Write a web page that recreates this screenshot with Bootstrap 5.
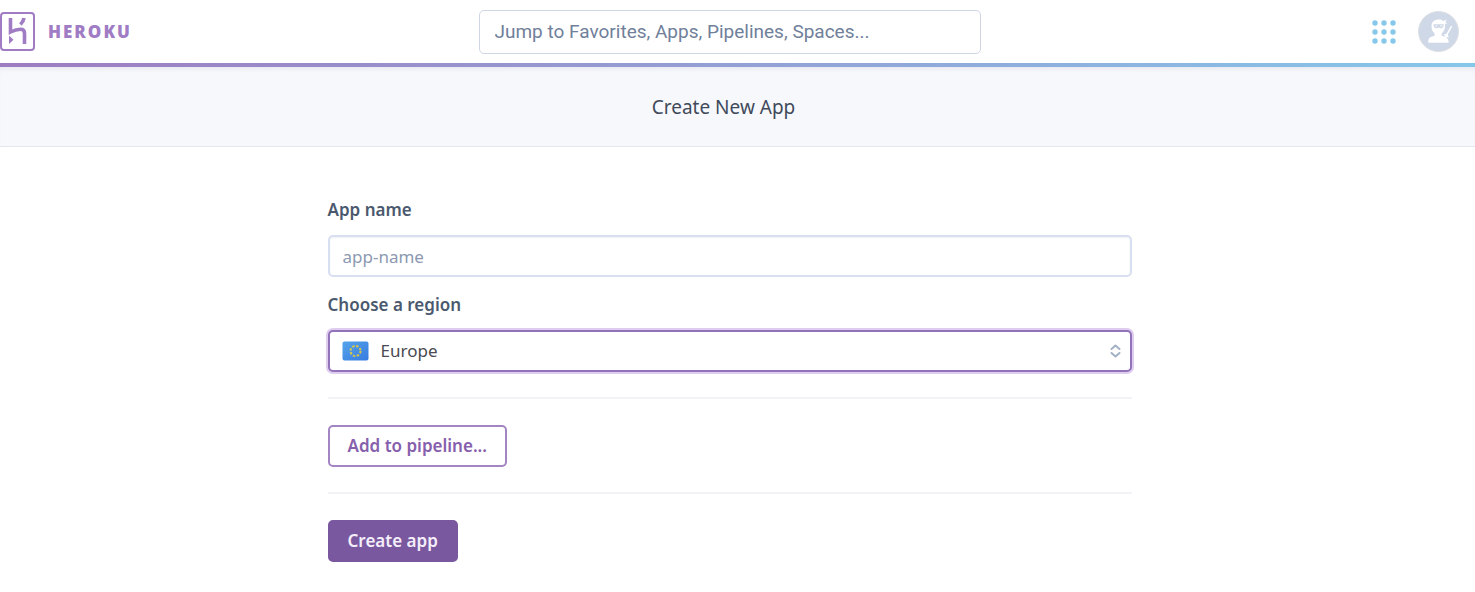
<!DOCTYPE html>
<html lang="en">
<head>
<meta charset="utf-8">
<meta name="viewport" content="width=device-width, initial-scale=1">
<title>Create New App | Heroku</title>
<link href="https://cdn.jsdelivr.net/npm/bootstrap@5.3.0/dist/css/bootstrap.min.css" rel="stylesheet">
<style>
  body { font-family: "Noto Sans", "Open Sans", sans-serif; font-size: 17px; line-height: 24px; color: #3f4e63; }
  .topbar { height: 63px; padding-right: 16px; display: grid; grid-template-columns: 1fr minmax(0, 502px) 1fr; column-gap: 16px; }
  .brand-link { color: #a07cc4; gap: 13px; }
  .brand-word { font-family: "Open Sans", sans-serif; font-size: 17px; font-weight: 800; letter-spacing: 2px; }
  .rainbow { height: 4px; background: linear-gradient(90deg, #9e7cc1, #8fabdc 65%, #86c7e9); }
  .jump { height: 44px; padding: 0 15px; font-family: Roboto, sans-serif; font-size: 19px; border: 1px solid #cfd7e6; border-radius: 5px; }
  .jump::placeholder { color: #70809a; }
  .tools { gap: 22px; }
  .titlebar { height: 80px; background: #f7f8fc; border-bottom: 1px solid #e3e8f0; box-shadow: inset 0 5px 5px -3px #e6e8f0; padding-right: 28px; }
  .titlebar h1 { font-size: 19px; line-height: 24px; color: #3f4a5a; font-weight: 400; }
  main { padding-right: 16px; }
  .app-form { max-width: 804px; padding-top: 51px; }
  .form-label { line-height: 24px; font-weight: 600; font-size: 17px; color: #4b596e; margin-bottom: 13px; }
  .field { height: 42px; font-size: 17px; padding: 0 13px; border: 2px solid #d8dff0; border-radius: 5px; box-shadow: inset 0 1px 2px #eef0f6; }
  .field::placeholder { color: #8c99b0; }
  .region { border-color: #9272b8; color: #4a4a50; padding: 0 32px 0 51px; background-image: none; box-shadow: 0 0 0 2px #dfcdf0; }
  .region:focus { border-color: #79589f; box-shadow: 0 0 0 3px #dfcdf0; }
  .flag { left: 14px; top: 11px; }
  .chevrons { right: 11px; top: 14px; }
  .divider { border: 0; border-top: 2px solid #f2f3f7; opacity: 1; margin: 25px 0 26px; }
  .action { height: 42px; padding: 0 18px; font-size: 17px; line-height: 24px; font-weight: 600; border: 2px solid #79589f; border-radius: 5px; }
  .action-outline { color: #8660ac; border-color: #a285c2; background: #fff; }
  .action-solid { color: #f4eefa; background: #79589f; }
  .action-outline:hover { color: #fff; background: #8660ac; }
  .action-solid:hover { color: #fff; background: #694b8d; }
</style>
</head>
<body>
<header>
  <div class="topbar align-items-center">
    <a class="brand-link d-inline-flex align-items-center text-decoration-none" href="#">
      <svg width="35" height="40" viewBox="0 0 35 40" fill="none" aria-hidden="true">
        <rect x="1" y="1" width="33" height="37" rx="3" stroke="currentColor" stroke-width="2"/>
        <path d="M10.500 6v14c4-2 7-2.800 10-2.800 3 0 4 1.500 4 4V32M24 6c-.4 2.500-1.600 4.500-3.600 6.500" stroke="currentColor" stroke-width="3.600"/>
        <path d="M9 23.500l4.500 4.200L9 32z" fill="currentColor"/>
      </svg>
      <span class="brand-word">HEROKU</span>
    </a>
    <input class="form-control jump" type="search" aria-label="Jump to" placeholder="Jump to Favorites, Apps, Pipelines, Spaces...">
    <div class="tools d-flex align-items-center justify-content-end">
      <button class="btn p-0 border-0 d-flex" type="button" aria-label="Applications">
        <svg width="25" height="24" viewBox="0 0 25 24" fill="#85c8ea">
          <circle cx="4" cy="3" r="2.700"/><circle cx="13" cy="3" r="2.700"/><circle cx="22" cy="3" r="2.700"/>
          <circle cx="4" cy="12" r="2.700"/><circle cx="13" cy="12" r="2.700"/><circle cx="22" cy="12" r="2.700"/>
          <circle cx="4" cy="21" r="2.700"/><circle cx="13" cy="21" r="2.700"/><circle cx="22" cy="21" r="2.700"/>
        </svg>
      </button>
      <button class="btn p-0 border-0 d-flex" type="button" aria-label="Account">
        <svg width="41" height="41" viewBox="0 0 41 41">
          <circle cx="20.500" cy="20.500" r="20" fill="#cfd8e7" stroke="#dedfe4"/>
          <path d="M13.500 15c0-4 3-6.500 7-6.500 2 0 3.500.5 4.700 1.400l3.500-1.400-1.200 2.200 1.700 2.300-2.200-.6c.4 4.500-.8 8-3.400 10v2.200l3 1.200 2.100-3.300 1.500 1-1.700 3.500c1.700 1 2.200 2.500 2.200 4.700H10.300c0-4 .9-5.200 3.300-6l3-1v-2.300c-2.200-1.700-3.100-4.100-3.100-7.400z" fill="#fff"/>
          <path d="M27.500 24.500l5.500-9.800 1.300.8-5.500 9.800zM26.500 22.800l4.300 2.500-.7 1.200-4.300-2.500z" fill="#fff"/>
          <path d="M15.500 13.300h10.300c0 2.500-1.100 3.900-3 3.900-1 0-1.600-.4-2.100-1-.5.600-1.200 1-2.100 1-1.900 0-3.100-1.400-3.100-3.900z" fill="#cfd8e7"/>
          <path d="M17.300 15h2M22.300 15h2" stroke="#fff"/>
        </svg>
      </button>
    </div>
  </div>
  <div class="rainbow"></div>
</header>
<div class="titlebar d-flex align-items-center justify-content-center">
  <h1 class="m-0">Create New App</h1>
</div>
<main>
  <form class="app-form mx-auto">
    <div class="mb-3">
      <label class="form-label d-block" for="app-name">App name</label>
      <input class="form-control field" id="app-name" type="text" placeholder="app-name">
    </div>
    <div>
      <label class="form-label d-block" for="region">Choose a region</label>
      <div class="position-relative">
        <select class="form-select field region" id="region">
          <option selected>Europe</option>
        </select>
        <svg class="flag position-absolute pe-none" width="27" height="20" viewBox="0 0 27 20" aria-hidden="true">
          <defs><linearGradient id="blue" x2="1" y2="1"><stop stop-color="#55a4ea"/><stop offset="1" stop-color="#377be0"/></linearGradient></defs>
          <rect x=".5" y=".5" width="26" height="19" rx="2" fill="url(#blue)"/>
          <circle cx="13.500" cy="10" r="5" fill="none" stroke="#d8c64c" stroke-width="2" stroke-dasharray="2.400 1.527"/>
        </svg>
        <svg class="chevrons position-absolute pe-none" width="11" height="14" viewBox="0 0 11 14" fill="none" stroke="#a3b0c5" stroke-width="2" stroke-linecap="round" stroke-linejoin="round" aria-hidden="true">
          <path d="M1.500 5l4-3.500 4 3.500M1.500 9l4 3.500 4-3.500"/>
        </svg>
      </div>
    </div>
    <hr class="divider">
    <button class="btn action action-outline" type="button">Add to pipeline...</button>
    <hr class="divider">
    <button class="btn action action-solid" type="button">Create app</button>
  </form>
</main>
<script src="https://cdn.jsdelivr.net/npm/bootstrap@5.3.0/dist/js/bootstrap.bundle.min.js"></script>
</body>
</html>
